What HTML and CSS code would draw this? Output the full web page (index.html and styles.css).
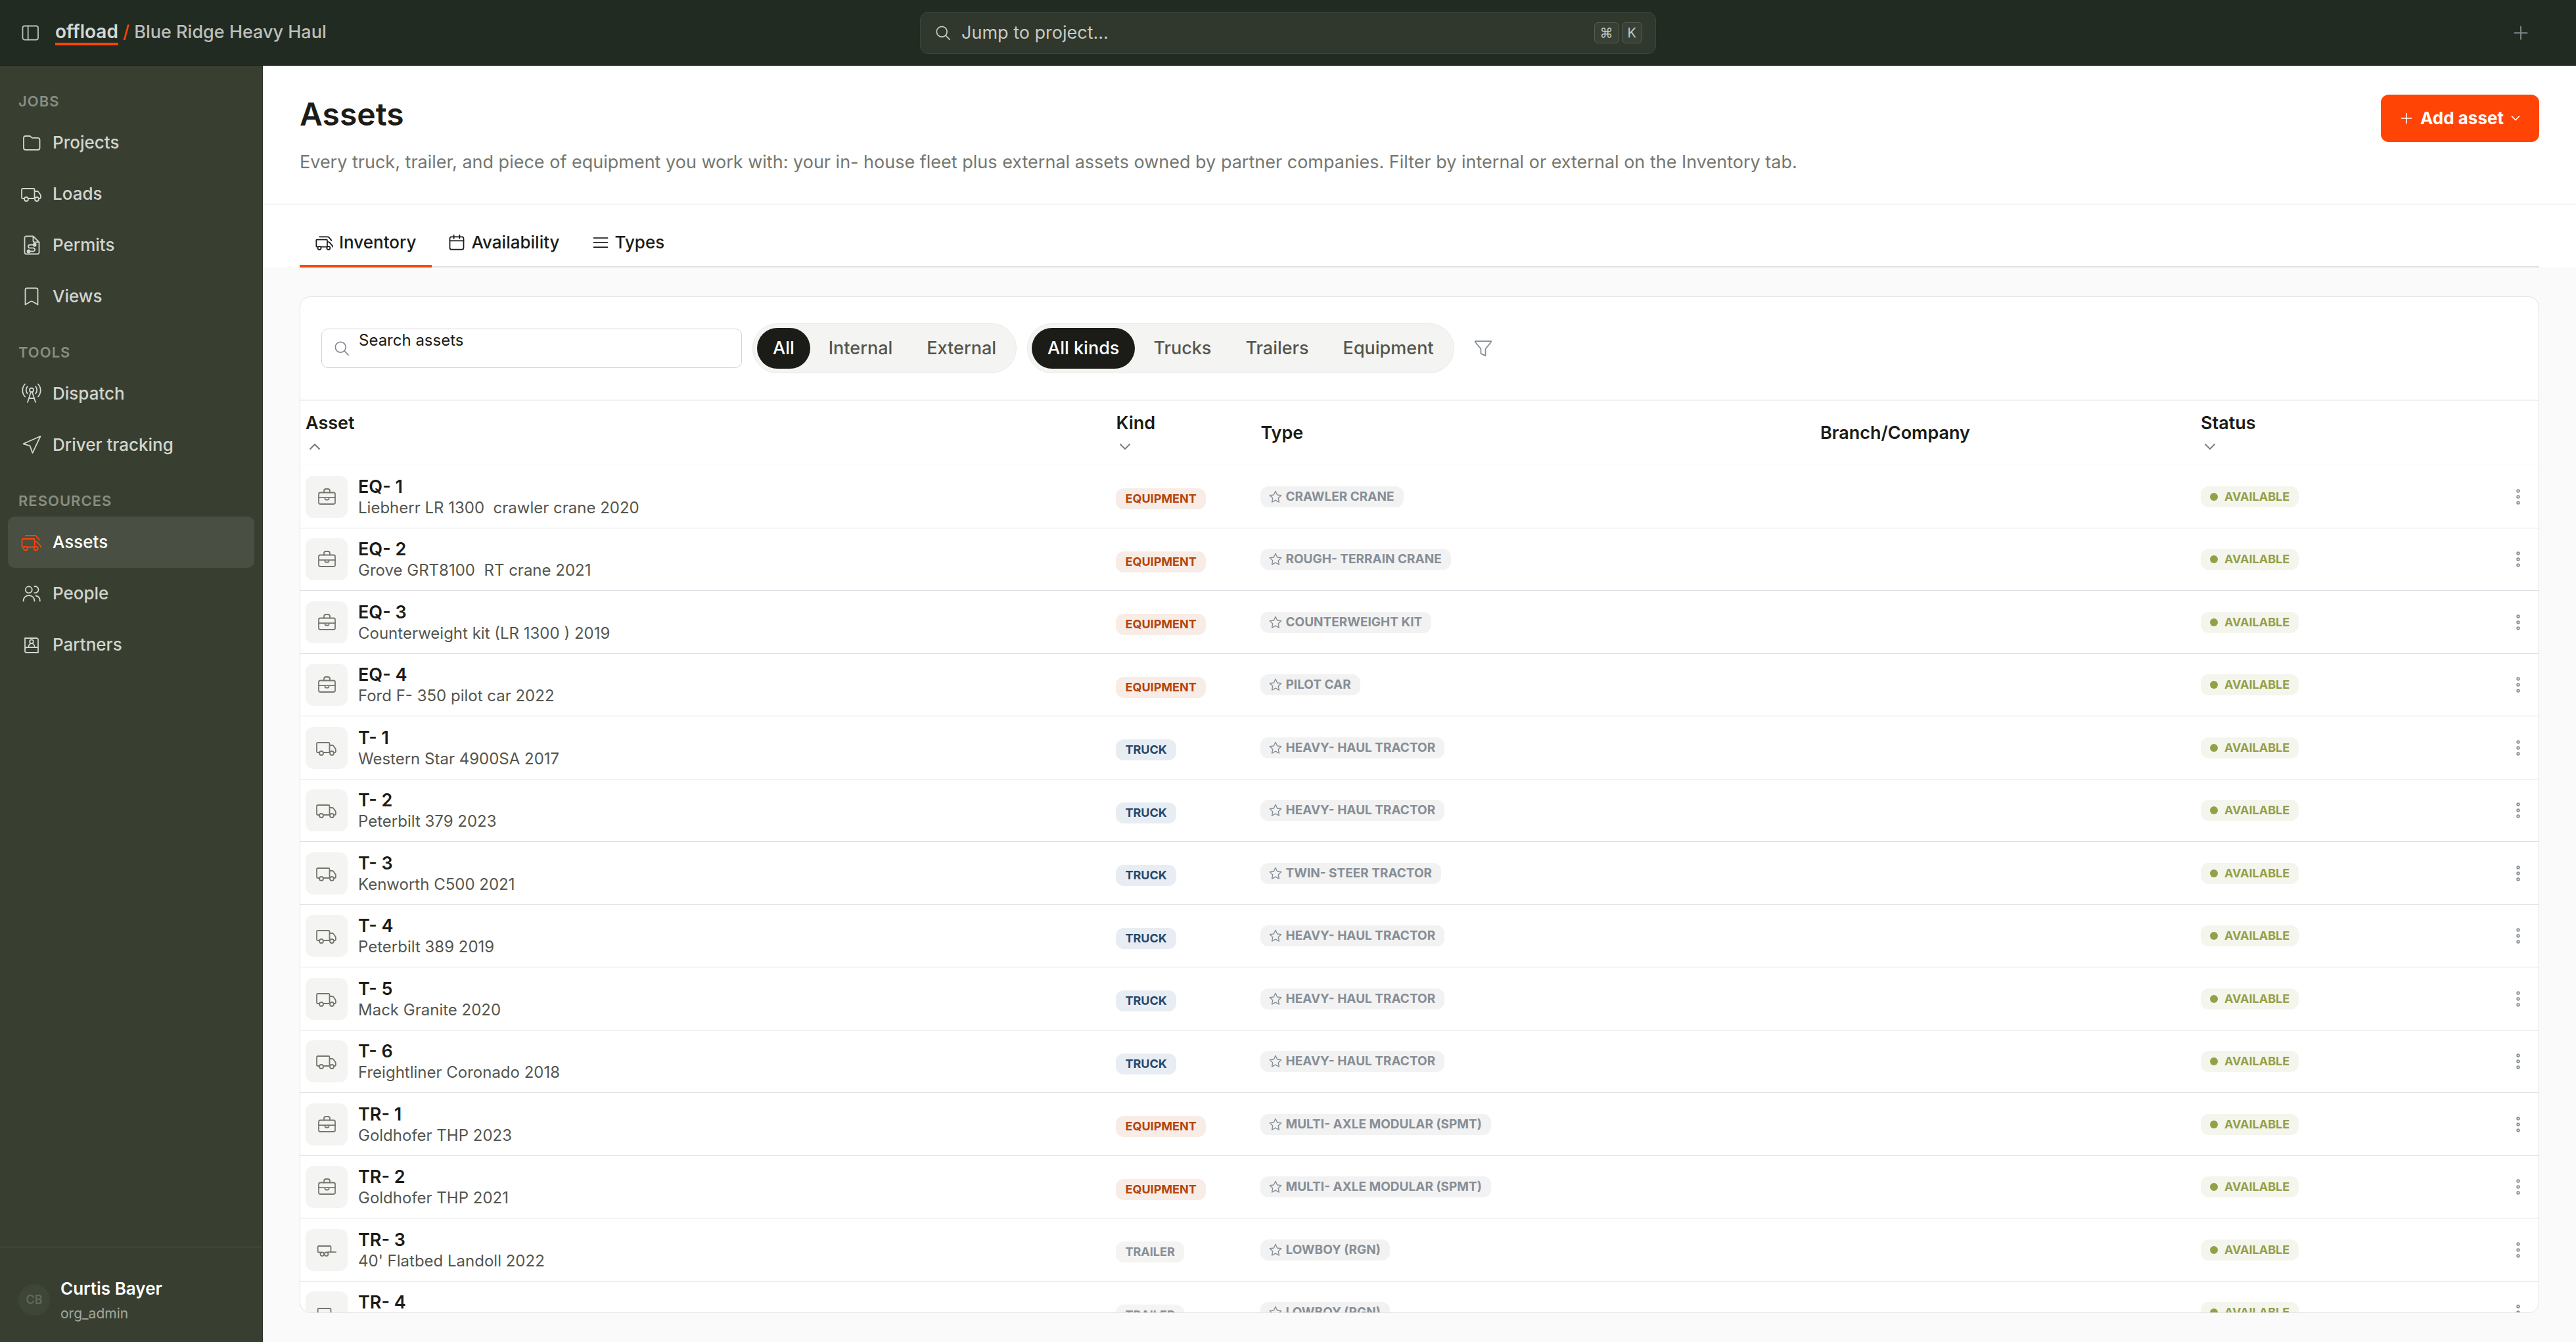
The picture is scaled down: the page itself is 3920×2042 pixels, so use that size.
FILE: index.html
```html
<!DOCTYPE html>
<html lang="en">
<head>
  <meta charset="UTF-8">
  <title>Assets - offload</title>
  <link rel="stylesheet" href="styles.css">
</head>
<body>

  <!-- Icon set -->
  <svg class="sprite" aria-hidden="true">
    <symbol id="i-panel" viewBox="0 0 32 32"><rect x="4.500" y="5.500" width="23.500" height="21" rx="3"/><path d="M12.700 5.500v21"/></symbol>
    <symbol id="i-search" viewBox="0 0 32 32"><circle cx="14" cy="14" r="9"/><path d="M20.500 20.500l7 7"/></symbol>
    <symbol id="i-plus" viewBox="0 0 32 32"><path d="M16 5v22M5 16h22"/></symbol>
    <symbol id="i-down" viewBox="0 0 16 16"><path d="M2 4.500l6 6 6-6"/></symbol>
    <symbol id="i-up" viewBox="0 0 16 16"><path d="M2 11l6-6 6 6"/></symbol>
    <symbol id="i-folder" viewBox="0 0 32 32"><path d="M7 6h5.500c1 0 1.800.4 2.400 1.100l.8.9c.4.500 1 .8 1.600.8H25.500a3 3 0 0 1 3 3V24a3 3 0 0 1-3 3H7a3 3 0 0 1-3-3V9a3 3 0 0 1 3-3z"/></symbol>
    <symbol id="i-truck" viewBox="0 0 32 32"><path d="M5 23H2.500A1.500 1.500 0 0 1 1 21.500v-12A1.500 1.500 0 0 1 2.500 8H19a1.500 1.500 0 0 1 1.500 1.500V23M11 23h10M20.500 12h3.700c.9 0 1.700.4 2.200 1.100l2.800 3.800c.5.700.7 1.400.7 2.300v2.300A1.500 1.500 0 0 1 28.400 23H27"/><circle cx="8" cy="24" r="3"/><circle cx="24" cy="24" r="3"/></symbol>
    <symbol id="i-permit" viewBox="0 0 32 32"><path d="M8 2.500h10.500l9 9V27a2.500 2.500 0 0 1-2.500 2.500H8A2.500 2.500 0 0 1 5.500 27V5A2.500 2.500 0 0 1 8 2.500zM18.500 2.500v7a2 2 0 0 0 2 2h7M20 15.500h-6.500a2.400 2.400 0 0 0 0 4.800h5a2.600 2.600 0 0 1 0 5.200h-7"/><circle class="dot" cx="20.700" cy="15.500" r="2"/><circle class="dot" cx="11.500" cy="25.500" r="2"/></symbol>
    <symbol id="i-bookmark" viewBox="0 0 32 32"><path d="M6.500 28.500V6A2.500 2.500 0 0 1 9 3.500h14A2.500 2.500 0 0 1 25.500 6v22.500l-8.200-4.800a2.500 2.500 0 0 0-2.600 0z"/></symbol>
    <symbol id="i-tower" viewBox="0 0 32 32"><circle cx="16" cy="10.500" r="3"/><path d="M15 13.500L10 29M17 13.500L22 29M12 23h8M9.800 5.200a8 8 0 0 0 0 10.600M22.200 5.200a8 8 0 0 1 0 10.600M6 1.500a14 14 0 0 0 0 19M26 1.500a14 14 0 0 1 0 19"/></symbol>
    <symbol id="i-arrow" viewBox="0 0 32 32"><path d="M29.500 2.800L3.500 14.300l10 3 4 11z"/></symbol>
    <symbol id="i-trucks" viewBox="0 0 32 32"><path d="M4 23.500H2.500a1 1 0 0 1-1-1V12a1 1 0 0 1 1-1h17a1 1 0 0 1 1 1v11.500M9.800 23.500h10M20.500 15h2.300c.5 0 1 .2 1.300.6l5.200 5.600c.3.300.5.800.5 1.300v1M7 6h14.500c.6 0 1.200.3 1.600.7l4.900 5.800"/><circle cx="6.900" cy="25.500" r="2.900"/><circle cx="22.700" cy="25.500" r="2.900"/></symbol>
    <symbol id="i-people" viewBox="0 0 32 32"><circle cx="11.800" cy="10.300" r="5"/><path d="M3.500 27.500c0-5 3.600-8.500 8.500-8.500s8.500 3.500 8.500 8.500M20.500 5.300a5 5 0 1 1 0 9.800M22.500 19.500c3.800.5 6.300 3.600 6.300 8"/></symbol>
    <symbol id="i-book" viewBox="0 0 32 32"><path d="M6 6h17.500A2.500 2.500 0 0 1 26 8.500V28H8.500A2.500 2.500 0 0 1 6 25.500zM6 23a3 3 0 0 1 3-3h17M11.300 20c0-3.400 2-5.800 4.700-5.800s4.700 2.400 4.700 5.800"/><circle cx="16" cy="11.200" r="2.800"/></symbol>
    <symbol id="i-calendar" viewBox="0 0 32 32"><rect x="4" y="6" width="24" height="22" rx="3"/><path d="M4 13h24M11 3v6M21 3v6"/></symbol>
    <symbol id="i-lines" viewBox="0 0 32 32"><path d="M4 8h24M4 16h24M4 24h24"/></symbol>
    <symbol id="i-filter" viewBox="0 0 32 32"><path d="M2 3.500h28l-.5 2L20 17v12l-8-4V17L2.500 5.500z"/></symbol>
    <symbol id="i-case" viewBox="0 0 32 32"><rect x="4" y="9.500" width="25" height="17.500" rx="2.500"/><path d="M12 9.500V7a3 3 0 0 1 3-3h3a3 3 0 0 1 3 3v2.500M4 17.200h25M13.500 17.200v1.800a1.500 1.500 0 0 0 1.500 1.500h3a1.500 1.500 0 0 0 1.500-1.500v-1.800"/></symbol>
    <symbol id="i-trailer" viewBox="0 0 32 32"><path d="M6.500 19.500H4A1.300 1.300 0 0 1 2.700 18.200v-6.900A1.300 1.300 0 0 1 4 10h17.200a1.300 1.300 0 0 1 1.300 1.300v8.200M18 19.200h12"/><circle cx="9.300" cy="22.300" r="2.800"/><circle cx="15.600" cy="22.300" r="2.800"/></symbol>
    <symbol id="i-star" viewBox="0 0 24 24"><path d="M12 2.500l2.900 6.200 6.600.8-4.900 4.600 1.300 6.700L12 17.500l-5.900 3.300 1.300-6.700L2.500 9.500l6.600-.8z"/></symbol>
    <symbol id="i-dots" viewBox="0 0 32 32"><circle cx="16" cy="7" r="1.800"/><circle cx="16" cy="16" r="1.800"/><circle cx="16" cy="25" r="1.800"/></symbol>
  </svg>

  <header class="topbar">
    <div class="brand">
      <button class="icon-btn" aria-label="Toggle sidebar"><svg class="icon"><use href="#i-panel"/></svg></button>
      <div class="crumbs"><a class="logo" href="#">offload</a> <span class="slash">/</span> <a class="org" href="#">Blue Ridge Heavy Haul</a></div>
    </div>
    <button class="jump">
      <svg class="icon small"><use href="#i-search"/></svg>
      <span class="jump-text">Jump to project...</span>
      <kbd>⌘</kbd><kbd>K</kbd>
    </button>
    <div class="top-actions">
      <button class="icon-btn add" aria-label="New"><svg class="icon small"><use href="#i-plus"/></svg></button>
    </div>
  </header>

  <div class="shell">
    <aside class="sidebar">
      <nav>
        <h2>Jobs</h2>
        <a href="#"><svg class="icon"><use href="#i-folder"/></svg>Projects</a>
        <a href="#"><svg class="icon"><use href="#i-truck"/></svg>Loads</a>
        <a href="#"><svg class="icon"><use href="#i-permit"/></svg>Permits</a>
        <a href="#"><svg class="icon"><use href="#i-bookmark"/></svg>Views</a>
        <h2>Tools</h2>
        <a href="#"><svg class="icon"><use href="#i-tower"/></svg>Dispatch</a>
        <a href="#"><svg class="icon"><use href="#i-arrow"/></svg>Driver tracking</a>
        <h2>Resources</h2>
        <a href="#" class="active"><svg class="icon"><use href="#i-trucks"/></svg>Assets</a>
        <a href="#"><svg class="icon"><use href="#i-people"/></svg>People</a>
        <a href="#"><svg class="icon"><use href="#i-book"/></svg>Partners</a>
      </nav>
      <div class="user">
        <span class="avatar">CB</span>
        <div>
          <div class="user-name">Curtis Bayer</div>
          <div class="user-role">org_admin</div>
        </div>
      </div>
    </aside>

    <main>
      <div class="page-head">
        <div>
          <h1>Assets</h1>
          <p>Every truck, trailer, and piece of equipment you work with: your in- house fleet plus external assets owned by partner companies. Filter by internal or external on the Inventory tab.</p>
        </div>
        <button class="primary"><svg class="icon tiny"><use href="#i-plus"/></svg>Add asset<svg class="chevron"><use href="#i-down"/></svg></button>
      </div>

      <div class="tabs-bar">
        <div class="tabs" role="tablist">
          <button class="tab active" role="tab" aria-selected="true"><svg class="icon small"><use href="#i-trucks"/></svg>Inventory</button>
          <button class="tab" role="tab"><svg class="icon small"><use href="#i-calendar"/></svg>Availability</button>
          <button class="tab" role="tab"><svg class="icon small"><use href="#i-lines"/></svg>Types</button>
        </div>
      </div>

      <section class="card">
        <div class="toolbar">
          <div class="search">
            <svg class="icon small"><use href="#i-search"/></svg>
            <input type="text" placeholder="Search assets" aria-label="Search assets">
          </div>
          <div class="segment">
            <button class="on">All</button>
            <button>Internal</button>
            <button>External</button>
          </div>
          <div class="segment">
            <button class="on">All kinds</button>
            <button>Trucks</button>
            <button>Trailers</button>
            <button>Equipment</button>
          </div>
          <button class="icon-btn filter" aria-label="Filter"><svg class="icon small"><use href="#i-filter"/></svg></button>
        </div>

        <div class="table-wrap">
          <table>
            <colgroup>
              <col class="c-asset"><col class="c-kind"><col class="c-type"><col class="c-branch"><col class="c-status"><col class="c-menu">
            </colgroup>
            <thead>
              <tr>
                <th>Asset<svg class="sort"><use href="#i-up"/></svg></th>
                <th>Kind<svg class="sort"><use href="#i-down"/></svg></th>
                <th>Type</th>
                <th>Branch/Company</th>
                <th>Status<svg class="sort"><use href="#i-down"/></svg></th>
                <th></th>
              </tr>
            </thead>
            <tbody>
              <tr>
                <td><div class="asset"><span class="thumb"><svg class="icon"><use href="#i-case"/></svg></span><div><b>EQ- 1</b><small>Liebherr LR 1300&nbsp; crawler crane 2020</small></div></div></td>
                <td class="kind"><span class="badge equipment">Equipment</span></td>
                <td><span class="badge type"><svg class="star"><use href="#i-star"/></svg>Crawler crane</span></td>
                <td></td>
                <td><span class="badge status">Available</span></td>
                <td><button class="more" aria-label="Actions"><svg class="icon"><use href="#i-dots"/></svg></button></td>
              </tr>
              <tr>
                <td><div class="asset"><span class="thumb"><svg class="icon"><use href="#i-case"/></svg></span><div><b>EQ- 2</b><small>Grove GRT8100&nbsp; RT crane 2021</small></div></div></td>
                <td class="kind"><span class="badge equipment">Equipment</span></td>
                <td><span class="badge type"><svg class="star"><use href="#i-star"/></svg>Rough- terrain crane</span></td>
                <td></td>
                <td><span class="badge status">Available</span></td>
                <td><button class="more" aria-label="Actions"><svg class="icon"><use href="#i-dots"/></svg></button></td>
              </tr>
              <tr>
                <td><div class="asset"><span class="thumb"><svg class="icon"><use href="#i-case"/></svg></span><div><b>EQ- 3</b><small>Counterweight kit (LR 1300 ) 2019</small></div></div></td>
                <td class="kind"><span class="badge equipment">Equipment</span></td>
                <td><span class="badge type"><svg class="star"><use href="#i-star"/></svg>Counterweight kit</span></td>
                <td></td>
                <td><span class="badge status">Available</span></td>
                <td><button class="more" aria-label="Actions"><svg class="icon"><use href="#i-dots"/></svg></button></td>
              </tr>
              <tr>
                <td><div class="asset"><span class="thumb"><svg class="icon"><use href="#i-case"/></svg></span><div><b>EQ- 4</b><small>Ford F- 350 pilot car 2022</small></div></div></td>
                <td class="kind"><span class="badge equipment">Equipment</span></td>
                <td><span class="badge type"><svg class="star"><use href="#i-star"/></svg>Pilot car</span></td>
                <td></td>
                <td><span class="badge status">Available</span></td>
                <td><button class="more" aria-label="Actions"><svg class="icon"><use href="#i-dots"/></svg></button></td>
              </tr>
              <tr>
                <td><div class="asset"><span class="thumb"><svg class="icon"><use href="#i-truck"/></svg></span><div><b>T- 1</b><small>Western Star 4900SA 2017</small></div></div></td>
                <td class="kind"><span class="badge truck">Truck</span></td>
                <td><span class="badge type"><svg class="star"><use href="#i-star"/></svg>Heavy- haul tractor</span></td>
                <td></td>
                <td><span class="badge status">Available</span></td>
                <td><button class="more" aria-label="Actions"><svg class="icon"><use href="#i-dots"/></svg></button></td>
              </tr>
              <tr>
                <td><div class="asset"><span class="thumb"><svg class="icon"><use href="#i-truck"/></svg></span><div><b>T- 2</b><small>Peterbilt 379 2023</small></div></div></td>
                <td class="kind"><span class="badge truck">Truck</span></td>
                <td><span class="badge type"><svg class="star"><use href="#i-star"/></svg>Heavy- haul tractor</span></td>
                <td></td>
                <td><span class="badge status">Available</span></td>
                <td><button class="more" aria-label="Actions"><svg class="icon"><use href="#i-dots"/></svg></button></td>
              </tr>
              <tr>
                <td><div class="asset"><span class="thumb"><svg class="icon"><use href="#i-truck"/></svg></span><div><b>T- 3</b><small>Kenworth C500 2021</small></div></div></td>
                <td class="kind"><span class="badge truck">Truck</span></td>
                <td><span class="badge type"><svg class="star"><use href="#i-star"/></svg>Twin- steer tractor</span></td>
                <td></td>
                <td><span class="badge status">Available</span></td>
                <td><button class="more" aria-label="Actions"><svg class="icon"><use href="#i-dots"/></svg></button></td>
              </tr>
              <tr>
                <td><div class="asset"><span class="thumb"><svg class="icon"><use href="#i-truck"/></svg></span><div><b>T- 4</b><small>Peterbilt 389 2019</small></div></div></td>
                <td class="kind"><span class="badge truck">Truck</span></td>
                <td><span class="badge type"><svg class="star"><use href="#i-star"/></svg>Heavy- haul tractor</span></td>
                <td></td>
                <td><span class="badge status">Available</span></td>
                <td><button class="more" aria-label="Actions"><svg class="icon"><use href="#i-dots"/></svg></button></td>
              </tr>
              <tr>
                <td><div class="asset"><span class="thumb"><svg class="icon"><use href="#i-truck"/></svg></span><div><b>T- 5</b><small>Mack Granite 2020</small></div></div></td>
                <td class="kind"><span class="badge truck">Truck</span></td>
                <td><span class="badge type"><svg class="star"><use href="#i-star"/></svg>Heavy- haul tractor</span></td>
                <td></td>
                <td><span class="badge status">Available</span></td>
                <td><button class="more" aria-label="Actions"><svg class="icon"><use href="#i-dots"/></svg></button></td>
              </tr>
              <tr>
                <td><div class="asset"><span class="thumb"><svg class="icon"><use href="#i-truck"/></svg></span><div><b>T- 6</b><small>Freightliner Coronado 2018</small></div></div></td>
                <td class="kind"><span class="badge truck">Truck</span></td>
                <td><span class="badge type"><svg class="star"><use href="#i-star"/></svg>Heavy- haul tractor</span></td>
                <td></td>
                <td><span class="badge status">Available</span></td>
                <td><button class="more" aria-label="Actions"><svg class="icon"><use href="#i-dots"/></svg></button></td>
              </tr>
              <tr>
                <td><div class="asset"><span class="thumb"><svg class="icon"><use href="#i-case"/></svg></span><div><b>TR- 1</b><small>Goldhofer THP 2023</small></div></div></td>
                <td class="kind"><span class="badge equipment">Equipment</span></td>
                <td><span class="badge type"><svg class="star"><use href="#i-star"/></svg>Multi- axle modular (SPMT)</span></td>
                <td></td>
                <td><span class="badge status">Available</span></td>
                <td><button class="more" aria-label="Actions"><svg class="icon"><use href="#i-dots"/></svg></button></td>
              </tr>
              <tr>
                <td><div class="asset"><span class="thumb"><svg class="icon"><use href="#i-case"/></svg></span><div><b>TR- 2</b><small>Goldhofer THP 2021</small></div></div></td>
                <td class="kind"><span class="badge equipment">Equipment</span></td>
                <td><span class="badge type"><svg class="star"><use href="#i-star"/></svg>Multi- axle modular (SPMT)</span></td>
                <td></td>
                <td><span class="badge status">Available</span></td>
                <td><button class="more" aria-label="Actions"><svg class="icon"><use href="#i-dots"/></svg></button></td>
              </tr>
              <tr>
                <td><div class="asset"><span class="thumb"><svg class="icon"><use href="#i-trailer"/></svg></span><div><b>TR- 3</b><small>40' Flatbed Landoll 2022</small></div></div></td>
                <td class="kind"><span class="badge trailer">Trailer</span></td>
                <td><span class="badge type"><svg class="star"><use href="#i-star"/></svg>Lowboy (RGN)</span></td>
                <td></td>
                <td><span class="badge status">Available</span></td>
                <td><button class="more" aria-label="Actions"><svg class="icon"><use href="#i-dots"/></svg></button></td>
              </tr>
              <tr>
                <td><div class="asset"><span class="thumb"><svg class="icon"><use href="#i-trailer"/></svg></span><div><b>TR- 4</b></div></div></td>
                <td class="kind"><span class="badge trailer">Trailer</span></td>
                <td><span class="badge type"><svg class="star"><use href="#i-star"/></svg>Lowboy (RGN)</span></td>
                <td></td>
                <td><span class="badge status">Available</span></td>
                <td><button class="more" aria-label="Actions"><svg class="icon"><use href="#i-dots"/></svg></button></td>
              </tr>
            </tbody>
          </table>
        </div>
      </section>
    </main>
  </div>

</body>
</html>
```
FILE: styles.css
```css
* {
  box-sizing: border-box;
}

body {
  margin: 0;
  height: 100vh;
  display: flex;
  flex-direction: column;
  overflow: hidden;
  font-family: Inter, sans-serif;
  font-size: 27px;
  line-height: 42px;
  color: #1b1c17;
  background: #fafafa;
}

h1, h2, p {
  margin: 0;
}

a {
  color: inherit;
  text-decoration: none;
}

button {
  font: inherit;
  color: inherit;
  background: none;
  border: 0;
  padding: 0;
  cursor: pointer;
}

.sprite {
  display: none;
}

.icon {
  width: 32px;
  height: 32px;
  flex: none;
  display: block;
  fill: none;
  stroke: currentColor;
  stroke-width: 1.8;
  stroke-linecap: round;
  stroke-linejoin: round;
}

.icon.small {
  width: 28px;
  height: 28px;
  stroke-width: 2;
}

.icon.tiny {
  width: 22px;
  height: 22px;
  stroke-width: 2.2;
}

.dot {
  fill: currentColor;
}

/* Top bar */
.topbar {
  flex: none;
  height: 100px;
  display: grid;
  grid-template-columns: 1fr 1120px 1fr;
  align-items: center;
  background: #222b22;
  border-bottom: 1px solid #1b2119;
  color: #bbbfb9;
}

.brand {
  display: flex;
  align-items: center;
  gap: 22px;
  padding-left: 30px;
}

.crumbs {
  font-weight: 500;
  line-height: 34px;
}

.logo {
  display: inline-block;
  font-size: 28px;
  font-weight: 600;
  color: #d5d8d2;
  border-bottom: 4px solid #ff4405;
}

.slash {
  color: #ff4405;
}

.jump {
  height: 64px;
  display: flex;
  align-items: center;
  gap: 4px;
  padding: 0 20px;
  background: #30372d;
  border: 1px solid #3d453a;
  border-radius: 12px;
  color: #c5c9c2;
}

.jump-text {
  flex: 1;
  padding-left: 10px;
  text-align: left;
}

kbd {
  height: 32px;
  padding: 0 8px;
  border: 1px solid #555c51;
  border-radius: 6px;
  background: #383f35;
  font-family: Inter, "DejaVu Sans", sans-serif;
  font-size: 20px;
  line-height: 30px;
}

.top-actions {
  display: flex;
  justify-content: flex-end;
  padding-right: 70px;
  color: #868e96;
}

/* Sidebar */
.shell {
  flex: 1;
  min-height: 0;
  display: flex;
}

.sidebar {
  flex: none;
  width: 400px;
  display: flex;
  flex-direction: column;
  justify-content: space-between;
  background: #383f31;
  border-right: 1px solid #2b3126;
  color: #d2d5cf;
}

.sidebar nav {
  padding: 8px 12px;
}

.sidebar h2 {
  padding: 32px 16px 10px;
  font-size: 22px;
  line-height: 28px;
  font-weight: 600;
  letter-spacing: 1px;
  text-transform: uppercase;
  color: #888e83;
}

.sidebar nav a {
  height: 78px;
  display: flex;
  align-items: center;
  gap: 16px;
  padding: 0 20px;
  border-radius: 10px;
  font-size: 26px;
  font-weight: 500;
}

.sidebar nav a.active {
  background: #494f42;
  color: #fff;
}

.sidebar nav a.active .icon {
  color: #ff4405;
}

.user {
  display: flex;
  align-items: center;
  gap: 16px;
  padding: 42px 28px 26px;
  border-top: 1px solid #51594b;
}

.avatar {
  width: 48px;
  height: 48px;
  border-radius: 50%;
  background: #3e4638;
  color: #5f6a58;
  font-size: 18px;
  font-weight: 600;
  line-height: 48px;
  text-align: center;
}

.user-name {
  font-size: 26px;
  font-weight: 600;
  color: #fff;
}

.user-role {
  font-size: 21px;
  line-height: 34px;
  color: #a3a7a0;
}

/* Page head */
main {
  flex: 1;
  min-width: 0;
  display: flex;
  flex-direction: column;
  padding-bottom: 44px;
}

.page-head {
  display: flex;
  justify-content: space-between;
  align-items: flex-start;
  padding: 44px 56px 42px;
  background: #fff;
  border-bottom: 1px solid #e5e5e5;
}

h1 {
  font-size: 48px;
  line-height: 60px;
  font-weight: 600;
}

.page-head p {
  margin-top: 22px;
  color: #75776f;
}

.primary {
  height: 72px;
  display: flex;
  align-items: center;
  gap: 10px;
  padding: 0 28px;
  border-radius: 12px;
  background: #ff4405;
  color: #fff;
  font-size: 26px;
  font-weight: 700;
}

.chevron, .sort {
  display: block;
  width: 16px;
  height: 16px;
  fill: none;
  stroke: currentColor;
  stroke-width: 1.6;
}

/* Tabs */
.tabs-bar {
  padding: 16px 56px 0;
  background: #fff;
}

.tabs {
  display: flex;
  box-shadow: inset 0 -2px #dee2e6;
}

.tab {
  height: 80px;
  display: flex;
  align-items: center;
  gap: 8px;
  padding: 8px 24px 0;
  border-bottom: 4px solid transparent;
  font-size: 26px;
  font-weight: 500;
}

.tab.active {
  border-bottom-color: #ff4405;
}

/* Card */
.card {
  flex: 1;
  min-height: 0;
  display: flex;
  flex-direction: column;
  margin: 44px 56px 0;
  background: #fff;
  border: 1px solid #e3e3e1;
  border-radius: 16px;
  overflow: hidden;
}

.toolbar {
  display: flex;
  align-items: center;
  gap: 16px;
  padding: 40px 32px;
  border-bottom: 2px solid #f1f1f0;
}

.search {
  width: 640px;
  height: 60px;
  display: flex;
  align-items: center;
  gap: 12px;
  padding: 0 16px;
  border: 1px solid #ced4da;
  border-radius: 10px;
  color: #868e96;
}

.search input {
  flex: 1;
  align-self: flex-start;
  height: 34px;
  padding: 0;
  border: 0;
  outline: 0;
  background: none;
  font: 24px/34px Inter, sans-serif;
  color: #1b1c17;
}

.search input::placeholder {
  color: #1b1c17;
}

.segment {
  display: flex;
  gap: 4px;
  padding: 6px;
  border: 1px solid #e9e9e5;
  border-radius: 38px;
  background: #f4f4f2;
}

.segment button {
  height: 62px;
  padding: 0 24px;
  border-radius: 31px;
  font-weight: 500;
  color: #54564e;
}

.segment .on {
  background: #1b1c17;
  color: #fff;
}

.filter {
  margin-left: 14px;
  color: #868e96;
}

/* Table */
.table-wrap {
  flex: 1;
  min-height: 0;
  overflow: hidden;
}

table {
  width: 100%;
  table-layout: fixed;
  border-collapse: separate;
  border-spacing: 0;
}

.c-kind {
  width: 220px;
}

.c-type {
  width: 25%;
}

.c-branch {
  width: 17%;
}

.c-status {
  width: 394px;
}

.c-menu {
  width: 128px;
}

th {
  height: 98px;
  padding: 0 8px;
  border-bottom: 1px solid #f6f6f6;
  font-weight: 600;
  text-align: left;
}

.sort {
  width: 28px;
  height: 30px;
  padding: 5px 4px;
  color: #75776f;
}

td {
  height: 95px;
  padding: 0 8px;
  border-bottom: 1px solid #dee2e6;
}

tbody tr:nth-child(odd) td {
  height: 96px;
}

.asset {
  display: flex;
  gap: 16px;
}

.thumb {
  width: 64px;
  height: 64px;
  display: flex;
  align-items: center;
  justify-content: center;
  border-radius: 12px;
  background: #f4f4f2;
  color: #75776f;
}

.asset b {
  display: block;
  font-weight: 600;
  line-height: 34px;
}

.asset small {
  display: block;
  font-size: 24px;
  line-height: 30px;
  color: #54564e;
}

.badge {
  display: flex;
  align-items: center;
  width: fit-content;
  height: 32px;
  padding: 0 14px;
  border-radius: 12px;
  font-size: 18px;
  font-weight: 700;
  line-height: 32px;
  text-transform: uppercase;
}

td.kind {
  padding-top: 7px;
}

.badge.equipment {
  background: #f8ece7;
  color: #b5440b;
}

.badge.truck {
  background: #e8edf3;
  color: #27476b;
}

.badge.trailer {
  background: #f4f4f2;
  color: #868e96;
}

.badge.type {
  padding-left: 12px;
  background: #f2f2f2;
  color: #868e96;
  font-size: 19px;
}

.star {
  width: 22px;
  height: 22px;
  margin-right: 4px;
  fill: none;
  stroke: currentColor;
  stroke-width: 1.5;
  stroke-linejoin: round;
}

.badge.status {
  gap: 10px;
  background: #f4f5ed;
  color: #959f47;
}

.badge.status::before {
  content: "";
  width: 12px;
  height: 12px;
  border-radius: 50%;
  background: currentColor;
}

.more {
  display: block;
  margin: 0 7px 0 auto;
  color: #868e96;
}
```
